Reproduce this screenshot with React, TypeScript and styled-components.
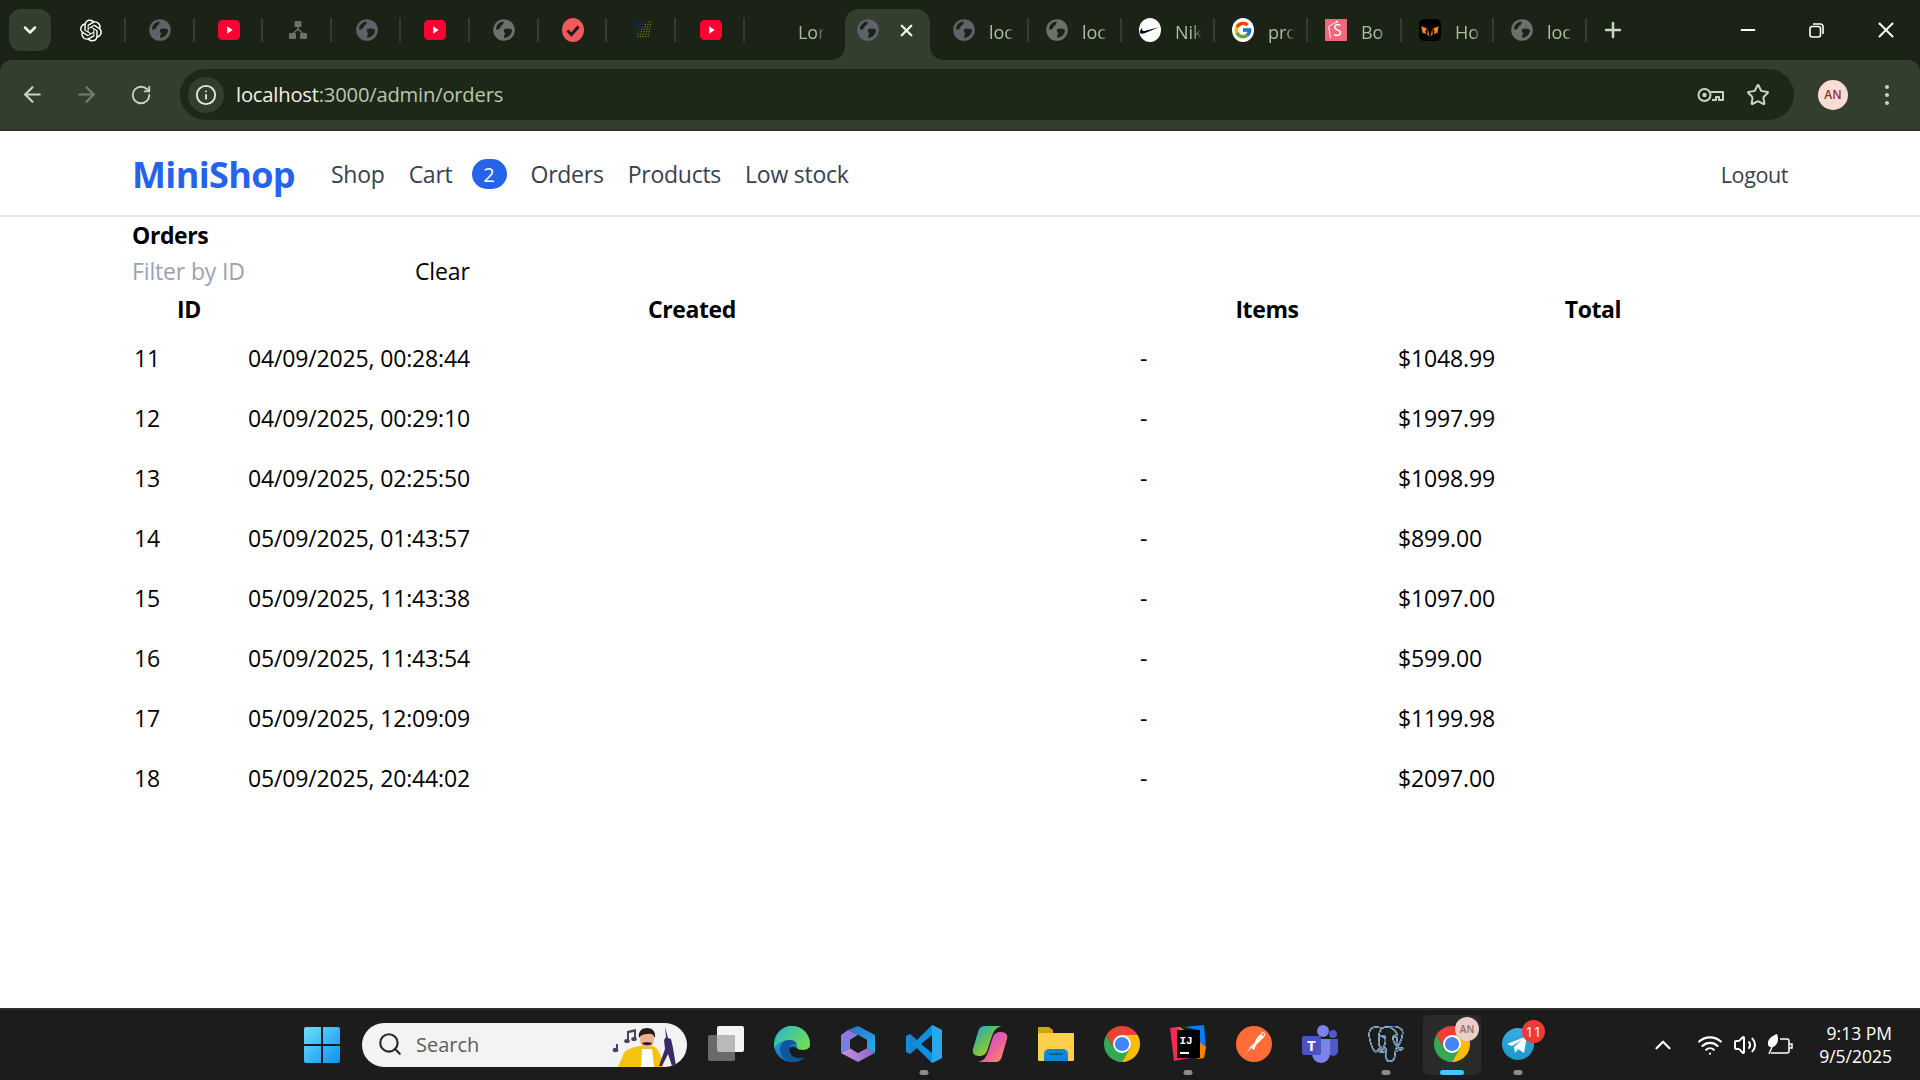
import React from "react";
import styled, { createGlobalStyle } from "styled-components";
import { ArrowLeft, ArrowRight, RotateCw, Info, Star, Plus, X, Minus, ChevronDown, ChevronUp, Search, Wifi, Volume2, Images } from "lucide-react";
import { SiOpenai, SiNike, SiPostgresql } from "react-icons/si";
import { FcGoogle } from "react-icons/fc";

const GlobalStyle = createGlobalStyle`
  html, body { margin: 0; padding: 0; height: 100%; overflow: hidden; background: #fff; }
  #root { height: 100%; }
  * { box-sizing: border-box; }
`;

const FONT = `"Open Sans", "Noto Sans", sans-serif`;

const Shell = styled.div`
  height: 100vh;
  display: flex;
  flex-direction: column;
  font-family: ${FONT};
  background: #fff;
`;

/* ---------- browser frame ---------- */
const BrowserFrame = styled.div`
  flex: none;
  background: #1a2315;
`;
const TabStrip = styled.div`
  height: 60px;
  display: flex;
  align-items: flex-start;
  color: #aebda2;
`;
const TabSearch = styled.div`
  width: 42px;
  height: 42px;
  margin: 9px 6px 0 9px;
  border-radius: 12px;
  background: #343e2e;
  color: #f0f3ea;
  display: flex;
  align-items: center;
  justify-content: center;
`;
const Tab = styled.div<{ $w: number; $sep?: boolean }>`
  position: relative;
  width: ${(p) => p.$w}px;
  height: 60px;
  flex: none;
  display: flex;
  align-items: center;
  &::after {
    content: "";
    display: ${(p) => (p.$sep ? "block" : "none")};
    position: absolute;
    right: 0;
    top: 18px;
    width: 2px;
    height: 24px;
    background: #333d2d;
  }
`;
const PinnedTab = styled(Tab)`
  justify-content: center;
`;
const TextTab = styled(Tab)`
  padding-left: 17px;
  gap: 14px;
`;
const ActiveTab = styled.div`
  position: relative;
  width: 85px;
  height: 51px;
  margin: 9px 6px 0 7px;
  padding-left: 12px;
  flex: none;
  display: flex;
  align-items: center;
  gap: 18px;
  padding-bottom: 9px;
  background: #343e2e;
  border-radius: 14px 14px 0 0;
  color: #f0f3ea;
  &::before, &::after {
    content: "";
    position: absolute;
    bottom: 0;
    width: 13px;
    height: 13px;
  }
  &::before {
    left: -13px;
    background: radial-gradient(circle at 0 0, transparent 12.5px, #343e2e 13px);
  }
  &::after {
    right: -13px;
    background: radial-gradient(circle at 100% 0, transparent 12.5px, #343e2e 13px);
  }
`;
const TabTitle = styled.span`
  width: 27px;
  white-space: nowrap;
  font-size: 18px;
  line-height: 24px;
  margin-top: 4px;
  color: #aebda2;
  -webkit-mask-image: linear-gradient(to right, #000 65%, transparent);
  mask-image: linear-gradient(to right, #000 65%, transparent);
`;
const Icon = styled.span`
  width: 22px;
  height: 24px;
  flex: none;
  display: flex;
  align-items: center;
  justify-content: center;
`;
const NewTab = styled.div`
  width: 52px;
  height: 60px;
  flex: none;
  display: flex;
  align-items: center;
  justify-content: center;
  color: #c9d6bd;
`;
const WindowControls = styled.div`
  margin-left: auto;
  display: flex;
`;
const WinButton = styled.div`
  width: 69px;
  height: 60px;
  display: flex;
  align-items: center;
  justify-content: center;
  color: #fff;
`;

/* ---------- toolbar ---------- */
const Toolbar = styled.div`
  height: 71px;
  display: flex;
  align-items: center;
  padding-left: 5px;
  background: #343e2e;
  border-bottom: 2px solid #2a3325;
  border-radius: 12px 12px 0 0;
  color: #c9d6bd;
`;
const NavBtn = styled.div<{ $dim?: boolean }>`
  width: 54.5px;
  height: 36px;
  flex: none;
  display: flex;
  align-items: center;
  justify-content: center;
  color: ${(p) => (p.$dim ? "#758469" : "#c9d6bd")};
`;
const AddressBar = styled.div`
  width: 1614px;
  height: 51px;
  margin-left: 11.5px;
  flex: none;
  display: flex;
  align-items: center;
  padding: 0 24px 0 8px;
  background: #1e2819;
  border-radius: 26px;
`;
const InfoChip = styled.div`
  width: 36px;
  height: 36px;
  flex: none;
  border-radius: 50%;
  background: #343e2e;
  color: #e6ebde;
  display: flex;
  align-items: center;
  justify-content: center;
`;
const Url = styled.div`
  margin: 0 0 1px 12px;
  font-size: 20.2px;
  letter-spacing: -0.2px;
  color: #b9c7ad;
  white-space: nowrap;
  b { font-weight: 400; color: #eef2e8; }
`;
const AddressIcons = styled.div`
  margin-left: auto;
  display: flex;
  align-items: center;
  gap: 22px;
  color: #c9d6bd;
`;
const Avatar = styled.div`
  width: 30px;
  height: 30px;
  margin-left: 24px;
  flex: none;
  border-radius: 50%;
  background: #f9dcd6;
  color: #86352b;
  font-size: 12px;
  font-weight: 600;
  display: flex;
  align-items: center;
  justify-content: center;
`;
const Kebab = styled.div`
  margin-left: 37px;
  display: flex;
  flex-direction: column;
  gap: 4px;
  span { width: 4px; height: 4px; border-radius: 50%; background: #c9d6bd; }
`;

/* ---------- page ---------- */
const Page = styled.div`
  flex: 1;
  min-height: 0;
  background: #fff;
`;
const SiteNav = styled.nav`
  height: 86px;
  display: flex;
  align-items: center;
  padding: 2px 132px 0;
  border-bottom: 2px solid #e5e7eb;
  color: #374151;
  font-size: 23px;
`;
const Logo = styled.div`
  width: 199px;
  font-size: 36px;
  font-weight: 700;
  letter-spacing: -0.65px;
  color: #2563eb;
  flex: none;
`;
const NavLink = styled.a<{ $gap?: number }>`
  margin-right: ${(p) => p.$gap ?? 24}px;
  letter-spacing: -0.25px;
  white-space: nowrap;
`;
const Badge = styled.span`
  width: 35px;
  height: 30px;
  margin-right: 24px;
  flex: none;
  border-radius: 15px;
  background: #2563eb;
  color: #fff;
  font-size: 20px;
  display: flex;
  align-items: center;
  justify-content: center;
`;
const Logout = styled.a`
  margin-left: auto;
  font-size: 21.5px;
  letter-spacing: -0.4px;
`;
const Main = styled.main`
  padding-left: 132px;
  color: #000;
  font-size: 23px;
  letter-spacing: -0.15px;
`;
const Title = styled.h1`
  margin: 0;
  height: 35px;
  line-height: 36px;
  font-size: 23px;
  font-weight: 700;
  letter-spacing: -0.4px;
`;
const FilterRow = styled.div`
  height: 38px;
  display: flex;
  align-items: center;
`;
const FilterInput = styled.input`
  width: 283px;
  border: 0;
  outline: 0;
  padding: 0;
  background: transparent;
  font: inherit;
  letter-spacing: inherit;
  &::placeholder { color: #9ca3af; opacity: 1; }
`;
const ClearButton = styled.button`
  border: 0;
  background: transparent;
  padding: 0;
  font: inherit;
  letter-spacing: inherit;
  color: #000;
`;
const Table = styled.table`
  width: 1658px;
  table-layout: fixed;
  border-collapse: collapse;
`;
const Col = styled.col<{ $w: number }>`
  width: ${(p) => p.$w}px;
`;
const Th = styled.th`
  height: 38px;
  padding: 0;
  text-align: center;
  font-weight: 700;
  letter-spacing: -0.4px;
`;
const Td = styled.td`
  height: 60px;
  padding: 0 2px;
`;

/* ---------- taskbar ---------- */
const Taskbar = styled.div`
  height: 72px;
  flex: none;
  display: flex;
  align-items: center;
  padding: 0 28px 0 289px;
  background: #1c1c1c;
  border-top: 2px solid #2e2e2e;
`;
const Start = styled.div`
  width: 66px;
  flex: none;
  display: flex;
  justify-content: center;
`;
const SearchPill = styled.div`
  position: relative;
  width: 325px;
  height: 44px;
  margin: 0 6px 0 7px;
  flex: none;
  display: flex;
  align-items: center;
  padding: 0 0 2px 15px;
  gap: 13px;
  border-radius: 22px;
  background: #f3f3f3;
  color: #5d5d5d;
  font-size: 20px;
  overflow: hidden;
  svg.glass { color: #2a2a2a; }
`;
const Mercury = styled.svg`
  position: absolute;
  right: 0;
  top: 0;
`;
const TaskItem = styled.div<{ $active?: boolean }>`
  position: relative;
  width: 66px;
  height: 60px;
  flex: none;
  display: flex;
  align-items: center;
  justify-content: center;
  padding-bottom: 3px;
  &::before {
    content: "";
    display: ${(p) => (p.$active ? "block" : "none")};
    position: absolute;
    inset: 0 4px;
    border-radius: 6px;
    background: #2b2b2b;
  }
  svg { position: relative; }
`;
const PgIcon = styled(SiPostgresql)`
  filter: drop-shadow(0 0 0.7px #fff) drop-shadow(0 0 0.4px #fff);
`;
const RunDot = styled.span<{ $active?: boolean }>`
  position: absolute;
  left: 50%;
  bottom: 0;
  transform: translateX(-50%);
  width: ${(p) => (p.$active ? 24 : 9)}px;
  height: 5px;
  border-radius: 3px;
  background: ${(p) => (p.$active ? "#4cc2ff" : "#8c8c8c")};
`;
const CountBadge = styled.span`
  position: absolute;
  right: 6px;
  top: 5px;
  width: 23px;
  height: 23px;
  border-radius: 50%;
  background: #ee3a3a;
  color: #fff;
  font-size: 14px;
  display: flex;
  align-items: center;
  justify-content: center;
`;
const AvatarPip = styled.span`
  position: absolute;
  right: 6px;
  top: 2px;
  width: 24px;
  height: 24px;
  border-radius: 50%;
  background: #e8cfc9;
  color: #a5675d;
  font-size: 10px;
  font-weight: 600;
  display: flex;
  align-items: center;
  justify-content: center;
`;
const Tray = styled.div`
  margin-left: auto;
  display: flex;
  align-items: center;
  gap: 10px;
  color: #fff;
`;
const TrayChevron = styled.span`
  display: flex;
  margin-right: 11px;
`;
const Clock = styled.div`
  width: 80px;
  margin-left: 9px;
  text-align: right;
  font-size: 17.5px;
  line-height: 23px;
  color: #fff;
  white-space: nowrap;
`;

/* ---------- drawn icons ---------- */
const Globe = ({ c = "#5f6368" }: { c?: string }) => (
  <svg width="22" height="22" viewBox="0 0 22 22">
    <circle cx="11" cy="11" r="10.8" fill={c} />
    <path d="M3 10.5C3 6 6.5 2.6 10.5 2.4 11 4.5 9.8 6 8 6.8 7.5 9.5 6 11 3 10.5Z" fill="#1a2315" />
    <path d="M11 10.6c2-1.8 5-1.5 8 .2.1 4.2-3.2 7.8-7.6 8.1-.6-2 .2-3.3 1.1-4.3-1-.6-2-2-1.5-4Z" fill="#1a2315" />
  </svg>
);
const YouTube = () => (
  <svg width="24" height="22" viewBox="0 0 24 22">
    <rect width="24" height="22" rx="5" fill="#ff0033" />
    <path d="M10 7l6 4-6 4Z" fill="#fff" />
  </svg>
);
const Tree = () => (
  <svg width="20" height="20" viewBox="0 0 20 20" fill="#6e6e6e">
    <rect x="6.5" y="1" width="7" height="6" rx="1" />
    <rect x="1" y="13" width="7" height="6" rx="1" />
    <rect x="12" y="13" width="7" height="6" rx="1" />
    <path d="M9.2 7h1.6v2L15.6 13h-2L10 10.2 6.4 13h-2L9.2 9Z" />
  </svg>
);
const TodoCheck = () => (
  <svg width="22" height="24" viewBox="0 0 22 24">
    <ellipse cx="11" cy="12" rx="11" ry="12" fill="#f2595a" />
    <path d="M5.5 12.5l4 4 7-8" fill="none" stroke="#1a1a1a" strokeWidth="3" />
  </svg>
);
const Dots = () => {
  const dots: React.ReactNode[] = [];
  for (let r = 0; r < 7; r++) {
    for (let c = 0; c < 7; c++) {
      if (c + (6 - r) < 2) continue;
      const x = 1 + c * 2.6 + (6 - r) * 0.5;
      const y = 2.5 + r * 2.4;
      dots.push(<rect key={`${r}-${c}`} x={x} y={y} width="1.1" height="1.1" fill={c > 4 - r / 2 ? "#8f8a10" : "#1b3a86"} />);
    }
  }
  return <svg width="22" height="22" viewBox="0 0 22 22">{dots}</svg>;
};
const BoltS = () => (
  <svg width="24" height="24" viewBox="0 0 24 24">
    <rect width="24" height="24" fill="#f0687a" />
    <path d="M4 8l9-5M4 8l2 13" stroke="#fff" strokeWidth="1" fill="none" />
    <circle cx="13" cy="3" r="1.2" fill="#fff" />
    <text x="9" y="19" fontSize="17" fill="#fff" fontFamily="Open Sans">S</text>
  </svg>
);
const Fox = () => (
  <svg width="24" height="24" viewBox="0 0 24 24">
    <rect width="24" height="24" rx="6" fill="#000" />
    <path d="M2.500 8l6 2-1.500 4 1 3-3-2-1 1Z" fill="#f6851b" />
    <path d="M21.500 8l-6 2 1.500 4-1 3 3-2 1 1Z" fill="#f6851b" />
    <path d="M9.500 10l2 9-2.500-2ZM14.500 10l-2 9 2.500-2Z" fill="#e2761b" />
  </svg>
);
const KeyIcon = () => (
  <svg width="27" height="16" viewBox="0 0 27 16" fill="none" stroke="currentColor" strokeWidth="2">
    <circle cx="7.5" cy="8" r="6" />
    <circle cx="7.5" cy="8" r="2.2" fill="currentColor" stroke="none" />
    <path d="M13.5 5H26v8h-4v-3h-3v3h-4" strokeLinejoin="round" />
  </svg>
);
const WinRestore = () => (
  <svg width="15" height="15" viewBox="0 0 15 15" fill="none" stroke="currentColor" strokeWidth="1.6">
    <rect x="1" y="3.5" width="10.5" height="10.5" rx="2.2" />
    <path d="M4 1h7.5A2.5 2.5 0 0 1 14 3.5V11" />
  </svg>
);
const WinLogo = () => (
  <svg width="36" height="36" viewBox="0 0 36 36">
    <defs>
      <linearGradient id="win" x1="0" y1="0" x2="1" y2="1">
        <stop offset="0" stopColor="#6fdcff" />
        <stop offset="1" stopColor="#0a93ee" />
      </linearGradient>
    </defs>
    <path d="M2 0h15v17H0V2a2 2 0 0 1 2-2ZM19 0h15a2 2 0 0 1 2 2v15H19ZM0 19h17v17H2a2 2 0 0 1-2-2ZM19 19h17v15a2 2 0 0 1-2 2H19Z" fill="url(#win)" />
  </svg>
);
const TaskView = () => (
  <svg width="36" height="36" viewBox="0 0 36 36">
    <rect x="9" y="0" width="27" height="26" rx="2" fill="#f4f4f4" />
    <rect x="0" y="9" width="27" height="26" rx="2" fill="#6a6a6a" />
    <path d="M9 9h16a2 2 0 0 1 2 2v15H11a2 2 0 0 1-2-2Z" fill="#b9b9b9" />
  </svg>
);
const Edge = () => (
  <svg width="36" height="36" viewBox="0 0 36 36">
    <defs>
      <linearGradient id="edgeA" x1="0" y1="0" x2="0.6" y2="1">
        <stop offset="0" stopColor="#2bb4e6" />
        <stop offset="1" stopColor="#0b62b8" />
      </linearGradient>
      <linearGradient id="edgeB" x1="0" y1="0" x2="1" y2="0.6">
        <stop offset="0" stopColor="#23b6cf" />
        <stop offset="1" stopColor="#6fdc55" />
      </linearGradient>
    </defs>
    <circle cx="18" cy="18" r="18" fill="url(#edgeA)" />
    <path d="M36 18c0 5-3.500 6.500-7 6.500-3.500 0-6-1.500-6-3.500 0-3-2-7-8-7-7 0-12 4-15 8C0 8 8 0 18 0s18 8 18 18Z" fill="url(#edgeB)" />
    <path d="M15 14c-6 0-9 5-9 9 0 6 5 13 13 13 5 0 9-2 12-5-3 1.500-9 1.500-12-.5-4-2.500-5-8-2-11 2-2 5-2 6-.5 1 1.500 0 0 0 0-.5-3-3-5-8-5Z" fill="#10569e" />
    <path d="M36 21c0 6-2 10-5 10-3 1.500-9 1.500-12-.5-3-2-4.500-6-3.500-8.500 2-2 5.500-1.500 7 0 2 2.500 11 3 13.500-1Z" fill="#1c1c1c" />
  </svg>
);
const M365 = () => (
  <svg width="34" height="36" viewBox="0 0 34 36">
    <defs>
      <linearGradient id="m1" x1="0" y1="0" x2="0" y2="1"><stop offset="0" stopColor="#a070dc" /><stop offset="1" stopColor="#5a8ddc" /></linearGradient>
      <linearGradient id="m2" x1="0" y1="0" x2="1" y2="1"><stop offset="0" stopColor="#2a6fc8" /><stop offset="1" stopColor="#28b0ec" /></linearGradient>
      <linearGradient id="m3" x1="0" y1="0" x2="1" y2="0"><stop offset="0" stopColor="#c796e0" /><stop offset="1" stopColor="#8b63cb" /></linearGradient>
    </defs>
    <path d="M17 0L34 9V27L26 22V14L17 9L7 4Z" fill="url(#m2)" />
    <path d="M7 4L17 9L9 14V22L0 27V9Z" fill="url(#m1)" />
    <path d="M0 27L9 22L17 27L26 22L34 27L17 36Z" fill="url(#m3)" />
    <path d="M9 14L17 9L26 14V22L17 27L9 22Z" fill="#1c1c1c" />
    <path d="M15 15l6 3-6 3Z" fill="#1c1c1c" />
  </svg>
);
const VSCode = () => (
  <svg width="36" height="38" viewBox="0 0 36 38">
    <path d="M26 0l10 5v28l-10 5-15-15-7 6-4-2V11l4-2 7 6Zm0 10L15 19l11 9Z" fill="#0e8fdf" />
    <path d="M26 0l10 5v28l-10 5Z" fill="#26a8ec" />
    <path d="M4 9l7 6-7 4ZM4 29l7-6-7-4Z" fill="#1c75b8" opacity="0.5" />
  </svg>
);
const Copilot = () => (
  <svg width="36" height="36" viewBox="0 0 36 36">
    <defs>
      <linearGradient id="c1" x1="0" y1="0" x2="1" y2="1"><stop offset="0" stopColor="#1e9ae0" /><stop offset="0.5" stopColor="#6fc34a" /><stop offset="1" stopColor="#f5c922" /></linearGradient>
      <linearGradient id="c2" x1="0" y1="0" x2="1" y2="1"><stop offset="0" stopColor="#a855e8" /><stop offset="0.6" stopColor="#f0609a" /><stop offset="1" stopColor="#ffa04a" /></linearGradient>
    </defs>
    <path d="M13 0H30C25 1 22 4 20 10L15 25C14 28 11 30 7 30 2 30 0 27 1 23L6 6C7 2 9 0 13 0Z" fill="url(#c1)" />
    <path d="M23 36H6C11 35 14 32 16 26L21 11C22 8 25 6 29 6 34 6 36 9 35 13L30 30C29 34 27 36 23 36Z" fill="url(#c2)" />
  </svg>
);
const Folder = () => (
  <svg width="36" height="34" viewBox="0 0 36 34">
    <path d="M1 0h10l4 3v6H0V1a1 1 0 0 1 1-1Z" fill="#d9a109" />
    <path d="M0 6h35a1 1 0 0 1 1 1v26a1 1 0 0 1-1 1H1a1 1 0 0 1-1-1Z" fill="#fdcf4f" />
    <path d="M6 34V27a5 5 0 0 1 5-5h14a5 5 0 0 1 5 5v7Z" fill="#0f86d8" />
    <rect x="11" y="26" width="14" height="2" fill="#085c9e" />
  </svg>
);
const Chrome = ({ s = 36 }: { s?: number }) => (
  <svg width={s} height={s} viewBox="2 2 44 44">
    <path d="M43.05 13A22 22 0 0 0 4.95 13L14.47 29.500 24 13Z" fill="#ea4335" />
    <path d="M4.950 13A22 22 0 0 0 24 46L33.530 29.500H14.470Z" fill="#34a853" />
    <path d="M24 46A22 22 0 0 0 43.050 13H24L33.530 29.500Z" fill="#fbbc04" />
    <circle cx="24" cy="24" r="11" fill="#fff" />
    <circle cx="24" cy="24" r="8.700" fill="#4285f4" />
  </svg>
);
const IntelliJ = () => (
  <svg width="36" height="38" viewBox="0 0 36 38">
    <path d="M14 2L34 0l2 24-6 3-1-22Z" fill="#087cfa" />
    <path d="M0 3l10-1 26 20-2 11-6 1Z" fill="#ff8100" />
    <path d="M0 3l9 0 16 29-21 4Z" fill="#fe2857" />
    <rect x="7" y="5" width="23" height="28" fill="#000" />
    <text x="9.500" y="19" fontSize="11" fontWeight="700" fill="#fff" fontFamily="Liberation Mono">IJ</text>
    <rect x="10" y="27" width="9" height="2" fill="#fff" />
  </svg>
);
const Postman = () => (
  <svg width="36" height="36" viewBox="0 0 36 36">
    <circle cx="18" cy="18" r="18" fill="#ff6c37" />
    <path d="M8 30l8-9 5-9c1-2 5-5 7-4 1.500 1 0 4-2 5l-6 6-2 5-2-1 1-5-3 3-2 4Z" fill="#fff" />
    <circle cx="27" cy="8.500" r="1.800" fill="#ff6c37" stroke="#fff" />
  </svg>
);
const Teams = () => (
  <svg width="36" height="38" viewBox="0 0 36 38">
    <circle cx="21" cy="6" r="6" fill="#7b83eb" />
    <circle cx="31" cy="9" r="4" fill="#5059c9" />
    <path d="M26 14h10v12a5 5 0 0 1-10 0Z" fill="#5059c9" />
    <path d="M10 14h18v15a9 9 0 0 1-18 0Z" fill="#7b83eb" />
    <rect y="11" width="19" height="19" rx="2" fill="#4b53bc" />
    <text x="5" y="26" fontSize="15" fontWeight="700" fill="#fff" fontFamily="Open Sans">T</text>
  </svg>
);
const Telegram = () => (
  <svg width="32" height="32" viewBox="0 0 32 32">
    <defs>
      <linearGradient id="tg" x1="0.5" y1="0" x2="0.5" y2="1"><stop offset="0" stopColor="#37aee2" /><stop offset="1" stopColor="#1e96c8" /></linearGradient>
    </defs>
    <circle cx="16" cy="16" r="16" fill="url(#tg)" />
    <path d="M5 16L25 8l-3 17-6-4-3 4-1-6 8-7-10 6Z" fill="#fff" />
  </svg>
);
const BatteryLeaf = () => (
  <svg width="26" height="24" viewBox="0 0 26 24" fill="none" stroke="#fff" strokeWidth="1.500">
    <path d="M13 6h7a2 2 0 0 1 2 2v10a2 2 0 0 1-2 2H4" />
    <path d="M22 11h3v4h-3" />
    <path d="M1 12C0 6 5 3 10 1c2 5 1 11-4 13-2 .5-4 0-5-2Z" fill="#fff" stroke="none" />
    <path d="M5 14L2 21" />
  </svg>
);
const MercuryArt = () => (
  <Mercury width="84" height="44" viewBox="0 0 84 44">
    <rect x="13" y="21" width="2" height="6" fill="#4a4458" />
    <ellipse cx="12.500" cy="27" rx="2.800" ry="2.200" fill="#4a4458" />
    <path d="M24 8l9-2v10h-2V9l-5 1v8h-2Z" fill="#4a4458" />
    <ellipse cx="24" cy="18" rx="2.800" ry="2" fill="#4a4458" />
    <ellipse cx="31" cy="16" rx="2.800" ry="2" fill="#4a4458" />
    <path d="M15 44l6-14c3-4 10-6 15-7h14c5 2 9 10 10 21Z" fill="#f3c30f" />
    <path d="M39 26h10l2 18H38Z" fill="#fff" />
    <ellipse cx="44" cy="16" rx="7" ry="9.500" fill="#e8b28c" />
    <path d="M36 15c-1-7 3-10 8-10s9 3 8 10c-2-4-3-5-8-4-4 0-6 1-8 4Z" fill="#2a1a14" />
    <path d="M39 20c3-1 7-1 10 0-1 3-8 3-10 0Z" fill="#1d1311" />
    <path d="M62 4l3 11 3 1 2 9 3 18h-4l-4-12-6 12h-3l6-17-1-9 2-3Z" fill="#3a2a63" />
  </Mercury>
);

/* ---------- data ---------- */
const pinned: React.ReactNode[] = [
  <SiOpenai size={23} color="#fff" />,
  <Globe />,
  <YouTube />,
  <Tree />,
  <Globe />,
  <YouTube />,
  <Globe c="#6e6e6e" />,
  <TodoCheck />,
  <Dots />,
  <YouTube />,
];

const Disc = styled.span`
  width: 24px;
  height: 24px;
  border-radius: 50%;
  background: #fff;
  color: #000;
  display: flex;
  align-items: center;
  justify-content: center;
`;

const rightTabs: { title: string; icon: React.ReactNode; w: number }[] = [
  { title: "loc", icon: <Globe />, w: 93 },
  { title: "loc", icon: <Globe c="#6e6e6e" />, w: 93 },
  { title: "Nik", icon: <Disc><SiNike size={19} /></Disc>, w: 93 },
  { title: "pro", icon: <Disc><FcGoogle size={20} /></Disc>, w: 93 },
  { title: "Bo", icon: <BoltS />, w: 94 },
  { title: "Ho", icon: <Fox />, w: 92 },
  { title: "loc", icon: <Globe c="#6e6e6e" />, w: 93 },
];

const orders = [
  { id: 11, created: "04/09/2025, 00:28:44", total: "$1048.99" },
  { id: 12, created: "04/09/2025, 00:29:10", total: "$1997.99" },
  { id: 13, created: "04/09/2025, 02:25:50", total: "$1098.99" },
  { id: 14, created: "05/09/2025, 01:43:57", total: "$899.00" },
  { id: 15, created: "05/09/2025, 11:43:38", total: "$1097.00" },
  { id: 16, created: "05/09/2025, 11:43:54", total: "$599.00" },
  { id: 17, created: "05/09/2025, 12:09:09", total: "$1199.98" },
  { id: 18, created: "05/09/2025, 20:44:02", total: "$2097.00" },
];

export default function App() {
  return (
    <Shell>
      <GlobalStyle />
      <BrowserFrame>
        <TabStrip>
          <TabSearch><ChevronDown size={20} strokeWidth={3} /></TabSearch>
          {pinned.map((ic, i) => (
            <PinnedTab key={i} $w={68.8} $sep><Icon>{ic}</Icon></PinnedTab>
          ))}
          <TextTab $w={93}>
            <Icon><Images size={24} color="#1f1f1f" /></Icon>
            <TabTitle>Lor</TabTitle>
          </TextTab>
          <ActiveTab>
            <Icon><Globe /></Icon>
            <X size={19} strokeWidth={3} />
          </ActiveTab>
          {rightTabs.map((t, i) => (
            <TextTab key={i} $w={t.w} $sep>
              <Icon>{t.icon}</Icon>
              <TabTitle>{t.title}</TabTitle>
            </TextTab>
          ))}
          <NewTab><Plus size={24} strokeWidth={2.5} /></NewTab>
          <WindowControls>
            <WinButton><Minus size={22} strokeWidth={2} /></WinButton>
            <WinButton><WinRestore /></WinButton>
            <WinButton><X size={26} strokeWidth={1.8} /></WinButton>
          </WindowControls>
        </TabStrip>

        <Toolbar>
          <NavBtn><ArrowLeft size={25} /></NavBtn>
          <NavBtn $dim><ArrowRight size={25} /></NavBtn>
          <NavBtn><RotateCw size={22} /></NavBtn>
          <AddressBar>
            <InfoChip><Info size={22} /></InfoChip>
            <Url><b>localhost</b>:3000/admin/orders</Url>
            <AddressIcons>
              <KeyIcon />
              <Star size={24} />
            </AddressIcons>
          </AddressBar>
          <Avatar>AN</Avatar>
          <Kebab><span /><span /><span /></Kebab>
        </Toolbar>
      </BrowserFrame>

      <Page>
        <SiteNav>
          <Logo>MiniShop</Logo>
          <NavLink>Shop</NavLink>
          <NavLink $gap={19}>Cart</NavLink>
          <Badge>2</Badge>
          <NavLink>Orders</NavLink>
          <NavLink>Products</NavLink>
          <NavLink>Low stock</NavLink>
          <Logout>Logout</Logout>
        </SiteNav>
        <Main>
          <Title>Orders</Title>
          <FilterRow>
            <FilterInput placeholder="Filter by ID" />
            <ClearButton>Clear</ClearButton>
          </FilterRow>
          <Table>
            <colgroup>
              <Col $w={114} />
              <Col $w={892} />
              <Col $w={258} />
              <Col $w={394} />
            </colgroup>
            <thead>
              <tr><Th>ID</Th><Th>Created</Th><Th>Items</Th><Th>Total</Th></tr>
            </thead>
            <tbody>
              {orders.map((o) => (
                <tr key={o.id}>
                  <Td>{o.id}</Td>
                  <Td>{o.created}</Td>
                  <Td>-</Td>
                  <Td>{o.total}</Td>
                </tr>
              ))}
            </tbody>
          </Table>
        </Main>
      </Page>

      <Taskbar>
        <Start><WinLogo /></Start>
        <SearchPill>
          <Search className="glass" size={26} />
          Search
          <MercuryArt />
        </SearchPill>
        <TaskItem><TaskView /></TaskItem>
        <TaskItem><Edge /></TaskItem>
        <TaskItem><M365 /></TaskItem>
        <TaskItem><VSCode /><RunDot /></TaskItem>
        <TaskItem><Copilot /></TaskItem>
        <TaskItem><Folder /></TaskItem>
        <TaskItem><Chrome /></TaskItem>
        <TaskItem><IntelliJ /><RunDot /></TaskItem>
        <TaskItem><Postman /></TaskItem>
        <TaskItem><Teams /></TaskItem>
        <TaskItem><PgIcon size={36} color="#3d77a8" /><RunDot /></TaskItem>
        <TaskItem $active><Chrome /><AvatarPip>AN</AvatarPip><RunDot $active /></TaskItem>
        <TaskItem><Telegram /><CountBadge>11</CountBadge><RunDot /></TaskItem>
        <Tray>
          <TrayChevron><ChevronUp size={26} /></TrayChevron>
          <Wifi size={26} />
          <Volume2 size={24} />
          <BatteryLeaf />
          <Clock>9:13 PM<br />9/5/2025</Clock>
        </Tray>
      </Taskbar>
    </Shell>
  );
}
